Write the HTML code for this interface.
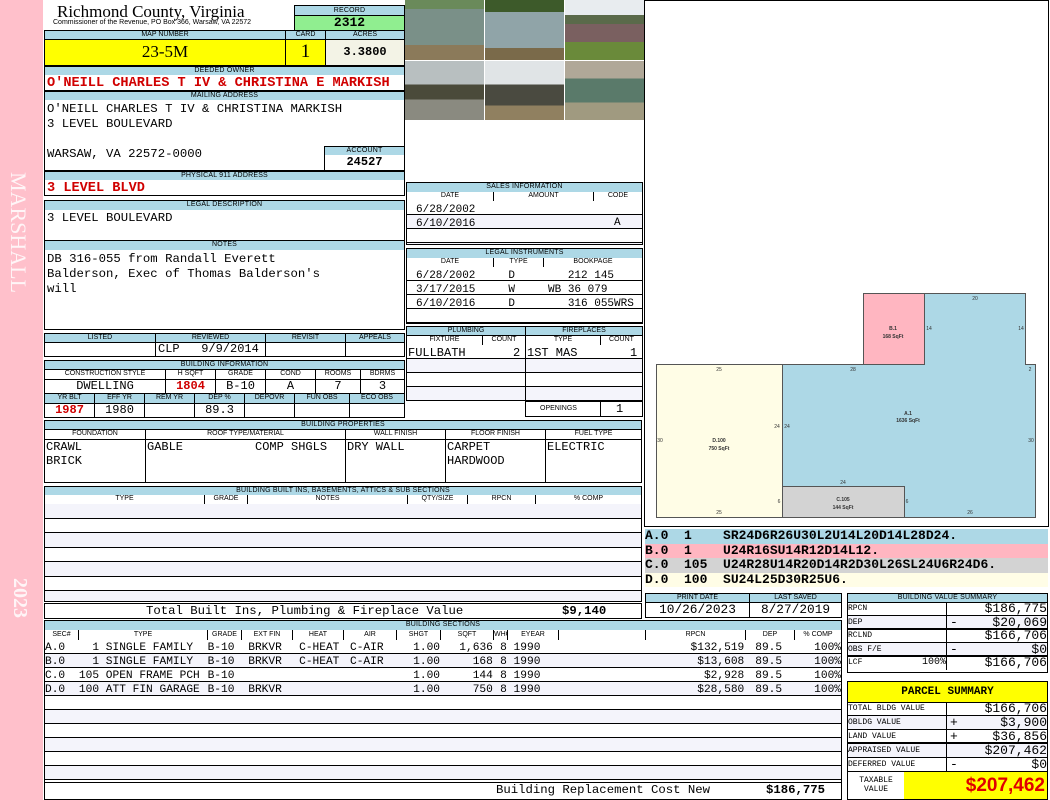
<!DOCTYPE html>
<html><head><meta charset="utf-8"><style>
*{margin:0;padding:0;box-sizing:border-box}
body{width:1050px;height:800px;position:relative;background:#fff;overflow:hidden;font-family:"Liberation Mono",monospace;font-size:11px;color:#000}
.a{position:absolute}
.h{position:absolute;background:#add8e6;border:1px solid #000;font:7px/8px "Liberation Sans",sans-serif;text-align:center;letter-spacing:.2px}
.bx{position:absolute;border:1px solid #000;background:#fff}
.r{position:absolute;display:flex;border:1px solid #000;border-top:none;background:#fff}
.r>div{border-right:1px solid #000;overflow:hidden;white-space:nowrap}
.r>div:last-child{border-right:none}
.hr{background:#fff;font:7px/9px "Liberation Sans",sans-serif;text-align:center}
.hb{background:#add8e6}
.m{font-family:"Liberation Mono",monospace;font-size:11px;line-height:13px}
.w{font-size:12.3px;white-space:nowrap}
.red{color:#d00000;font-weight:bold}
.big{font-size:13.6px}
.c{text-align:center}.rt{text-align:right}
.sr{position:absolute;left:45px;width:796px;display:flex;height:14px;line-height:14px;font-size:11.2px;white-space:pre}
.sr>div{overflow:visible}
</style></head><body>
<div class="a" style="left:0;top:0;width:43px;height:800px;background:#ffc0cb"></div>
<div class="a" style="left:31px;top:172px;transform-origin:0 0;transform:rotate(90deg);font:22px 'Liberation Serif',serif;color:#fff;white-space:nowrap;opacity:.85">MARSHALL</div>
<div class="a" style="left:31px;top:578px;transform-origin:0 0;transform:rotate(90deg);font:bold 20px 'Liberation Serif',serif;color:#fff;white-space:nowrap;opacity:.85">2023</div>

<div class="a" style="left:57px;top:2px;font:17px 'Liberation Serif',serif">Richmond County, Virginia</div>
<div class="a" style="left:53px;top:19px;font:7px 'Liberation Sans',sans-serif;white-space:nowrap">Commissioner of the Revenue, PO Box 366, Warsaw, VA 22572</div>
<div class="h" style="left:294px;top:5px;width:111px;height:11px;line-height:9px">RECORD</div>
<div class="a c" style="left:294px;top:15px;width:111px;height:16px;background:#90ee90;border:1px solid #000;font-weight:bold;font-size:13px;line-height:14px">2312</div>

<div class="r hr hb" style="left:44px;top:30px;width:361px;height:10px;border-top:1px solid #000;line-height:8px"><div style="width:241px">MAP NUMBER</div><div style="width:40px">CARD</div><div style="flex:1">ACRES</div></div>
<div class="r" style="left:44px;top:40px;width:361px;height:26px"><div style="width:241px;background:#ffff00;font:17px/24px 'Liberation Serif',serif;text-align:center">23-5M</div><div style="width:40px;background:#ffff00;font:19px/24px 'Liberation Serif',serif;text-align:center">1</div><div style="flex:1;background:#f3f3e6;font-weight:bold;font-size:12px;text-align:center;line-height:24px">3.3800</div></div>

<div class="h" style="left:44px;top:66px;width:361px;height:10px">DEEDED OWNER</div>
<div class="bx" style="left:44px;top:75px;width:361px;height:16px;border-top:none"></div>
<div class="a red m big" style="left:47px;top:77px;white-space:nowrap">O'NEILL CHARLES T IV &amp; CHRISTINA E MARKISH</div>
<div class="h" style="left:44px;top:91px;width:361px;height:10px">MAILING ADDRESS</div>
<div class="bx" style="left:44px;top:100px;width:361px;height:71px;border-top:none"></div>
<div class="a m w" style="left:47px;top:102px;line-height:15px">O'NEILL CHARLES T IV &amp; CHRISTINA MARKISH<br>3 LEVEL BOULEVARD<br><br>WARSAW, VA 22572-0000</div>
<div class="h" style="left:324px;top:146px;width:81px;height:10px">ACCOUNT</div>
<div class="bx c" style="left:324px;top:155px;width:81px;height:16px;border-top:none;font-weight:bold;font-size:12px;line-height:14px">24527</div>
<div class="h" style="left:44px;top:171px;width:361px;height:10px">PHYSICAL 911 ADDRESS</div>
<div class="bx" style="left:44px;top:180px;width:361px;height:16px;border-top:none"></div>
<div class="a red m big" style="left:47px;top:182px">3 LEVEL BLVD</div>

<div class="h" style="left:44px;top:200px;width:361px;height:11px">LEGAL DESCRIPTION</div>
<div class="bx" style="left:44px;top:210px;width:361px;height:31px;border-top:none"></div>
<div class="a m w" style="left:47px;top:212px">3 LEVEL BOULEVARD</div>
<div class="h" style="left:44px;top:240px;width:361px;height:11px">NOTES</div>
<div class="bx" style="left:44px;top:250px;width:361px;height:80px;border-top:none"></div>
<div class="a m w" style="left:47px;top:252px;line-height:15px">DB 316-055 from Randall Everett<br>Balderson, Exec of Thomas Balderson's<br>will</div>

<div class="r hr hb" style="left:44px;top:333px;width:361px;height:10px;border-top:1px solid #000;line-height:8px"><div style="width:111px">LISTED</div><div style="width:110px">REVIEWED</div><div style="width:80px">REVISIT</div><div style="flex:1">APPEALS</div></div>
<div class="r m" style="left:44px;top:343px;width:361px;height:14px;font-size:12px"><div style="width:111px"></div><div style="width:110px;padding-left:2px">CLP&nbsp;&nbsp;&nbsp;9/9/2014</div><div style="width:80px"></div><div style="flex:1"></div></div>

<div class="h" style="left:44px;top:360px;width:361px;height:10px">BUILDING INFORMATION</div>
<div class="r hr" style="left:44px;top:370px;width:361px;height:10px;line-height:8px"><div style="width:121px">CONSTRUCTION STYLE</div><div style="width:50px">H SQFT</div><div style="width:50px">GRADE</div><div style="width:50px">COND</div><div style="width:45px">ROOMS</div><div style="flex:1">BDRMS</div></div>
<div class="r m c" style="left:44px;top:380px;width:361px;height:14px;font-size:12px"><div style="width:121px">DWELLING</div><div style="width:50px" class="red">1804</div><div style="width:50px">B-10</div><div style="width:50px">A</div><div style="width:45px">7</div><div style="flex:1">3</div></div>
<div class="r hr hb" style="left:44px;top:394px;width:361px;height:10px;line-height:8px"><div style="width:50px">YR BLT</div><div style="width:50px">EFF YR</div><div style="width:50px">REM YR</div><div style="width:50px">DEP %</div><div style="width:50px">DEPOVR</div><div style="width:55px">FUN OBS</div><div style="flex:1">ECO OBS</div></div>
<div class="r m c" style="left:44px;top:404px;width:361px;height:14px;font-size:12px"><div style="width:50px" class="red">1987</div><div style="width:50px">1980</div><div style="width:50px"></div><div style="width:50px">89.3</div><div style="width:50px"></div><div style="width:55px"></div><div style="flex:1"></div></div>

<div class="h" style="left:44px;top:420px;width:598px;height:10px">BUILDING PROPERTIES</div>
<div class="r hr" style="left:44px;top:430px;width:598px;height:10px;line-height:8px"><div style="width:101px">FOUNDATION</div><div style="width:200px">ROOF TYPE/MATERIAL</div><div style="width:100px">WALL FINISH</div><div style="width:100px">FLOOR FINISH</div><div style="flex:1">FUEL TYPE</div></div>
<div class="r m" style="left:44px;top:440px;width:598px;height:43px;line-height:14px;font-size:12px"><div style="width:101px;padding-left:1px">CRAWL<br>BRICK</div><div style="width:200px;padding-left:1px">GABLE&nbsp;&nbsp;&nbsp;&nbsp;&nbsp;&nbsp;&nbsp;&nbsp;&nbsp;&nbsp;COMP SHGLS</div><div style="width:100px;padding-left:1px">DRY WALL</div><div style="width:100px;padding-left:1px">CARPET<br>HARDWOOD</div><div style="flex:1;padding-left:1px">ELECTRIC</div></div>

<div class="h" style="left:44px;top:486px;width:598px;height:10px">BUILDING BUILT INS, BASEMENTS, ATTICS &amp; SUB SECTIONS</div>
<div class="r hr" style="left:44px;top:495px;width:598px;height:10px;line-height:8px"><div style="width:160px">TYPE</div><div style="width:43px">GRADE</div><div style="width:160px">NOTES</div><div style="width:60px">QTY/SIZE</div><div style="width:68px">RPCN</div><div style="flex:1">% COMP</div></div>
<div class="bx" style="left:44px;top:504px;width:598px;height:98px;border-top:none;background:repeating-linear-gradient(#f4f4fb 0 14px,#000 14px 15px,#fff 15px 28px,#000 28px 29px)"></div>
<div class="bx m w" style="left:44px;top:603px;width:598px;height:16px"><span class="a" style="left:101px;top:1px">Total Built Ins, Plumbing &amp; Fireplace Value</span><span class="a" style="left:517px;top:1px;font-weight:bold">$9,140</span></div>

<div class="h" style="left:44px;top:620px;width:798px;height:11px">BUILDING SECTIONS</div>
<div class="r hr" style="left:44px;top:630px;width:798px;height:11px;line-height:9px"><div style="width:34px">SEC#</div><div style="width:129px">TYPE</div><div style="width:34px">GRADE</div><div style="width:51px">EXT FIN</div><div style="width:51px">HEAT</div><div style="width:53px">AIR</div><div style="width:44px">SHGT</div><div style="width:53px">SQFT</div><div style="width:14px">WHGT</div><div style="width:51px">EYEAR</div><div style="width:87px"></div><div style="width:100px">RPCN</div><div style="width:49px">DEP</div><div style="flex:1">% COMP</div></div>
<div class="bx" style="left:44px;top:640px;width:798px;height:160px;border-top:none;background:repeating-linear-gradient(#fff 0 13px,#000 13px 14px,#f4f4fb 14px 27px,#000 27px 28px)"></div>
<div class="sr" style="top:641px"><div style="width:34px">A.0</div><div style="width:129px">  1 SINGLE FAMILY</div><div style="width:34px">B-10</div><div style="width:51px"> BRKVR</div><div style="width:51px"> C-HEAT</div><div style="width:53px"> C-AIR</div><div style="width:44px" class="rt">1.00</div><div style="width:53px" class="rt">1,636</div><div style="width:14px" class="rt">8</div><div style="width:51px"> 1990</div><div style="width:87px"></div><div style="width:100px" class="rt">$132,519</div><div style="width:49px" class="c">89.5</div><div style="width:48px" class="rt">100%</div></div>
<div class="sr" style="top:655px"><div style="width:34px">B.0</div><div style="width:129px">  1 SINGLE FAMILY</div><div style="width:34px">B-10</div><div style="width:51px"> BRKVR</div><div style="width:51px"> C-HEAT</div><div style="width:53px"> C-AIR</div><div style="width:44px" class="rt">1.00</div><div style="width:53px" class="rt">168</div><div style="width:14px" class="rt">8</div><div style="width:51px"> 1990</div><div style="width:87px"></div><div style="width:100px" class="rt">$13,608</div><div style="width:49px" class="c">89.5</div><div style="width:48px" class="rt">100%</div></div>
<div class="sr" style="top:669px"><div style="width:34px">C.0</div><div style="width:129px">105 OPEN FRAME PCH</div><div style="width:34px">B-10</div><div style="width:51px"></div><div style="width:51px"></div><div style="width:53px"></div><div style="width:44px" class="rt">1.00</div><div style="width:53px" class="rt">144</div><div style="width:14px" class="rt">8</div><div style="width:51px"> 1990</div><div style="width:87px"></div><div style="width:100px" class="rt">$2,928</div><div style="width:49px" class="c">89.5</div><div style="width:48px" class="rt">100%</div></div>
<div class="sr" style="top:683px"><div style="width:34px">D.0</div><div style="width:129px">100 ATT FIN GARAGE</div><div style="width:34px">B-10</div><div style="width:51px"> BRKVR</div><div style="width:51px"></div><div style="width:53px"></div><div style="width:44px" class="rt">1.00</div><div style="width:53px" class="rt">750</div><div style="width:14px" class="rt">8</div><div style="width:51px"> 1990</div><div style="width:87px"></div><div style="width:100px" class="rt">$28,580</div><div style="width:49px" class="c">89.5</div><div style="width:48px" class="rt">100%</div></div>
<div class="a" style="left:44px;top:782px;width:798px;height:18px;background:#fff;border:1px solid #000"></div>
<div class="a m w" style="left:496px;top:784px">Building Replacement Cost New</div>
<div class="a m w" style="left:766px;top:784px;font-weight:bold">$186,775</div>

<div class="a" style="left:405px;top:0;width:79px;height:60px;background:linear-gradient(#6a8a5a 0 15%,#7a9088 15% 75%,#8b7a5a 75%)"></div>
<div class="a" style="left:485px;top:0;width:79px;height:60px;background:linear-gradient(#3d5a2a 0 20%,#90a4a8 20% 80%,#7a6a4a 80%)"></div>
<div class="a" style="left:565px;top:0;width:79px;height:60px;background:linear-gradient(#e8ecef 0 25%,#5a6a4a 25% 40%,#7a6060 40% 70%,#6a8a3a 70%)"></div>
<div class="a" style="left:405px;top:61px;width:79px;height:59px;background:linear-gradient(#b8bfc0 0 40%,#4a4a3a 40% 65%,#8a8a80 65%)"></div>
<div class="a" style="left:485px;top:61px;width:79px;height:59px;background:linear-gradient(#e0e4e6 0 40%,#4a4a40 40% 75%,#908060 75%)"></div>
<div class="a" style="left:565px;top:61px;width:79px;height:59px;background:linear-gradient(#b0a898 0 30%,#5a7a6a 30% 70%,#a09a80 70%)"></div>

<div class="h" style="left:406px;top:182px;width:237px;height:11px">SALES INFORMATION</div>
<div class="r hr" style="left:406px;top:192px;width:237px;height:10px;line-height:8px"><div style="width:87px">DATE</div><div style="width:100px">AMOUNT</div><div style="flex:1">CODE</div></div>
<div class="bx" style="left:406px;top:201px;width:237px;height:44px;border-top:none;background:repeating-linear-gradient(#fff 0 13px,#000 13px 14px,#f4f4fb 14px 27px,#000 27px 28px)"></div>
<div class="a m" style="left:416px;top:203px;line-height:14px">6/28/2002<br>6/10/2016</div>
<div class="a m" style="left:614px;top:217px">A</div>

<div class="h" style="left:406px;top:248px;width:237px;height:11px">LEGAL INSTRUMENTS</div>
<div class="r hr" style="left:406px;top:258px;width:237px;height:10px;line-height:8px"><div style="width:87px">DATE</div><div style="width:50px">TYPE</div><div style="flex:1">BOOKPAGE</div></div>
<div class="bx" style="left:406px;top:267px;width:237px;height:57px;border-top:none;background:repeating-linear-gradient(#fff 0 13px,#000 13px 14px)"></div>
<div class="a m" style="left:416px;top:269px;line-height:14px;white-space:pre">6/28/2002     D        212 145
3/17/2015     W     WB 36 079
6/10/2016     D        316 055WRS</div>

<div class="r hr hb" style="left:406px;top:326px;width:237px;height:10px;border-top:1px solid #000;line-height:8px"><div style="width:119px">PLUMBING</div><div style="flex:1">FIREPLACES</div></div>
<div class="r hr" style="left:406px;top:336px;width:237px;height:10px;line-height:8px"><div style="width:76px">FIXTURE</div><div style="width:43px">COUNT</div><div style="width:75px">TYPE</div><div style="flex:1">COUNT</div></div>
<div class="a" style="left:406px;top:345px;width:120px;height:56px;border:1px solid #000;border-top:none;background:repeating-linear-gradient(#fff 0 13px,#000 13px 14px,#f4f4fb 14px 27px,#000 27px 28px)"></div>
<div class="a" style="left:525px;top:345px;width:118px;height:72px;border:1px solid #000;border-top:none;background:repeating-linear-gradient(#fff 0 13px,#000 13px 14px,#f4f4fb 14px 27px,#000 27px 28px)"></div>
<div class="a" style="left:525px;top:401px;width:118px;height:16px;background:#fff;border:1px solid #000;font:7px/14px 'Liberation Sans',sans-serif"><span class="a" style="left:14px">OPENINGS</span><span class="a" style="left:74px;top:0;height:14px;border-left:1px solid #000"></span><span class="a m" style="left:90px;top:1px;font-size:12px">1</span></div>
<div class="a m" style="left:408px;top:347px;font-size:12px">FULLBATH</div>
<div class="a m" style="left:513px;top:347px;font-size:12px">2</div>
<div class="a m" style="left:527px;top:347px;font-size:12px">1ST MAS</div>
<div class="a m" style="left:630px;top:347px;font-size:12px">1</div>

<div class="bx" style="left:644px;top:0;width:405px;height:527px"></div>
<svg class="a" style="left:0;top:0" width="1050" height="527">
<g stroke="#555" stroke-width="1">
<rect x="863.5" y="293.5" width="61" height="71" fill="#ffb6c1"/>
<path d="M924.5 293.5H1025.5V364.5H1035.5V517.5H782.5V364.5H924.5Z" fill="#add8e6"/>
<rect x="656.5" y="364.5" width="126" height="153" fill="#fffde6"/>
<rect x="782.5" y="486.5" width="122" height="31" fill="#d3d3d3"/>
</g>
<g font-family="Liberation Sans" font-size="5" fill="#333" text-anchor="middle">
<text x="975" y="300">20</text><text x="929" y="330">14</text><text x="1021" y="330">14</text>
<text x="719" y="371">25</text><text x="853" y="371">28</text><text x="1030" y="371">2</text>
<text x="777" y="428">24</text><text x="787" y="428">24</text><text x="660" y="442">30</text><text x="1031" y="442">30</text>
<text x="843" y="484">24</text><text x="779" y="503">6</text><text x="907" y="503">6</text>
<text x="719" y="514">25</text><text x="970" y="514">26</text>
<g font-weight="bold"><text x="893" y="330">B.1</text><text x="893" y="338">168 SqFt</text>
<text x="908" y="415">A.1</text><text x="908" y="422">1636 SqFt</text>
<text x="719" y="442">D.100</text><text x="719" y="450">750 SqFt</text>
<text x="843" y="501">C.105</text><text x="843" y="509">144 SqFt</text></g>
</g></svg>
<div class="a" style="left:645px;top:529px;width:403px;height:58px;overflow:hidden;font:bold 13px/14.5px 'Liberation Mono',monospace;white-space:pre"><div style="background:#add8e6">A.0  1    SR24D6R26U30L2U14L20D14L28D24.</div><div style="background:#ffb6c1">B.0  1    U24R16SU14R12D14L12.</div><div style="background:#d3d3d3">C.0  105  U24R28U14R20D14R2D30L26SL24U6R24D6.</div><div style="background:#fffde6">D.0  100  SU24L25D30R25U6.</div></div>

<div class="r hr hb" style="left:645px;top:593px;width:197px;height:10px;border-top:1px solid #000;line-height:8px"><div style="width:104px">PRINT DATE</div><div style="flex:1">LAST SAVED</div></div>
<div class="r m c" style="left:645px;top:603px;width:197px;height:15px;font-size:12.8px"><div style="width:104px">10/26/2023</div><div style="flex:1">8/27/2019</div></div>

<div class="h" style="left:847px;top:593px;width:201px;height:10px">BUILDING VALUE SUMMARY</div>
<div class="a" style="left:847px;top:602px;width:201px;height:71px;border:1px solid #000;border-top:none;font-size:13px;line-height:14px">
<div style="display:flex;border-bottom:1px solid #000;height:14px"><div style="width:99px;border-right:1px solid #000;font-size:8px">RPCN</div><div style="flex:1" class="rt">$186,775</div></div>
<div style="display:flex;border-bottom:2px solid #000;height:14px;background:#f4f4fb"><div style="width:99px;border-right:1px solid #000;font-size:8px">DEP</div><div style="flex:1;display:flex;justify-content:space-between;padding-left:3px"><span>-</span><span>$20,069</span></div></div>
<div style="display:flex;border-bottom:1px solid #000;height:13px;line-height:12px"><div style="width:99px;border-right:1px solid #000;font-size:8px">RCLND</div><div style="flex:1" class="rt">$166,706</div></div>
<div style="display:flex;border-bottom:2px solid #000;height:14px;background:#f4f4fb"><div style="width:99px;border-right:1px solid #000;font-size:8px">OBS F/E</div><div style="flex:1;display:flex;justify-content:space-between;padding-left:3px"><span>-</span><span>$0</span></div></div>
<div style="display:flex;height:13px;line-height:12px"><div style="width:99px;border-right:1px solid #000;font-size:8px;display:flex;justify-content:space-between"><span>LCF</span><span style="font-size:10px">100%</span></div><div style="flex:1" class="rt">$166,706</div></div>
</div>

<div class="a c" style="left:847px;top:681px;width:201px;height:22px;background:#ffff00;border:1px solid #000;font:bold 11px/20px 'Liberation Mono',monospace">PARCEL SUMMARY</div>
<div class="a" style="left:847px;top:702px;width:201px;height:70px;border:1px solid #000;border-top:none;font-size:13px;line-height:13px">
<div style="display:flex;border-bottom:1px solid #000;height:14px"><div style="width:99px;border-right:1px solid #000;font-size:8px">TOTAL BLDG VALUE</div><div style="flex:1" class="rt">$166,706</div></div>
<div style="display:flex;border-bottom:1px solid #000;height:14px;background:#f4f4fb"><div style="width:99px;border-right:1px solid #000;font-size:8px">OBLDG VALUE</div><div style="flex:1;display:flex;justify-content:space-between;padding-left:3px"><span>+</span><span>$3,900</span></div></div>
<div style="display:flex;border-bottom:2px solid #000;height:14px"><div style="width:99px;border-right:1px solid #000;font-size:8px">LAND VALUE</div><div style="flex:1;display:flex;justify-content:space-between;padding-left:3px"><span>+</span><span>$36,856</span></div></div>
<div style="display:flex;border-bottom:1px solid #000;height:14px;background:#f4f4fb"><div style="width:99px;border-right:1px solid #000;font-size:8px">APPRAISED VALUE</div><div style="flex:1" class="rt">$207,462</div></div>
<div style="display:flex;height:13px"><div style="width:99px;border-right:1px solid #000;font-size:8px">DEFERRED VALUE</div><div style="flex:1;display:flex;justify-content:space-between;padding-left:3px"><span>-</span><span>$0</span></div></div>
</div>
<div class="a" style="left:847px;top:771px;width:201px;height:29px;border:1px solid #000;display:flex"><div style="width:56px;font-size:8px;line-height:9px;text-align:center;padding-top:4px;background:#fff">TAXABLE<br>VALUE</div><div style="flex:1;background:#ffff00;color:#e00000;font:bold 19px/27px 'Liberation Sans',sans-serif;text-align:right;padding-right:2px">$207,462</div></div>
</body></html>
